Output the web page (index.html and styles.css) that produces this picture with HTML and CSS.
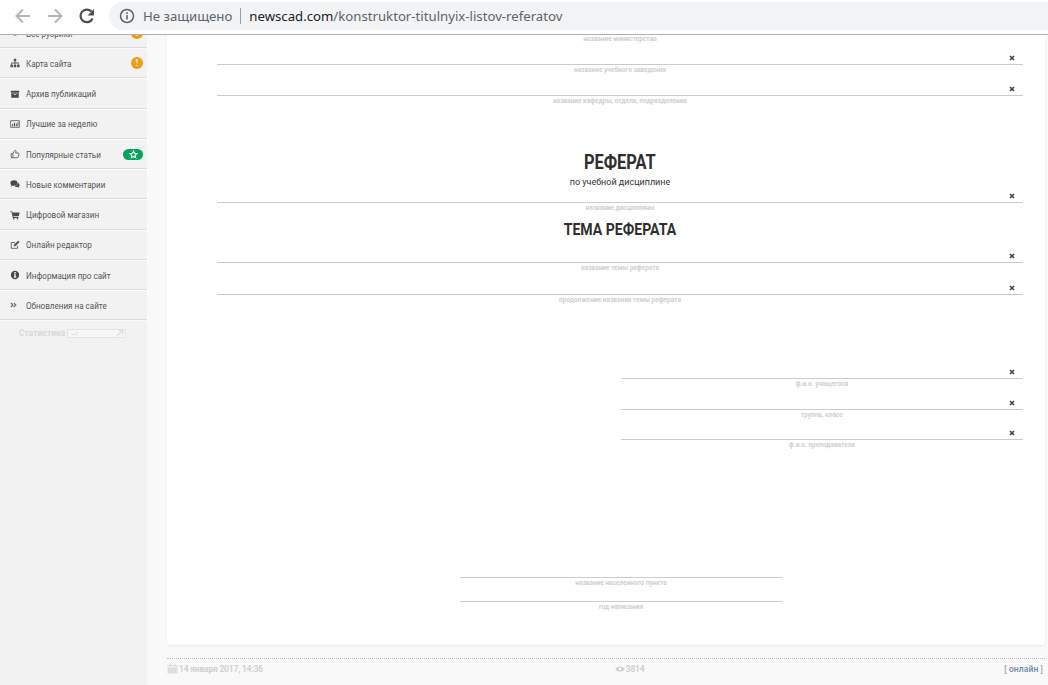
FILE: index.html
```html
<!DOCTYPE html>
<html lang="ru">
<head>
<meta charset="utf-8">
<title>Конструктор титульных листов рефератов</title>
<link rel="stylesheet" href="styles.css">
</head>
<body>
<header class="toolbar">
  <svg class="nav-icon" width="18" height="18" viewBox="0 0 18 18"><path d="M16 9H3M9 2.5 2.5 9 9 15.5" fill="none" stroke="#b4b4b4" stroke-width="2"/></svg>
  <svg class="nav-icon" width="18" height="18" viewBox="0 0 18 18"><path d="M2 9h13M9 2.500 15.500 9 9 15.500" fill="none" stroke="#b4b4b4" stroke-width="2"/></svg>
  <svg class="nav-icon" width="18" height="18" viewBox="0 0 18 18"><path d="M14.600 11.500A6.300 6.300 0 1 1 13.400 4.500" fill="none" stroke="#4f4f4f" stroke-width="2.200"/><path d="M16 2v6.500H9.500z" fill="#4f4f4f"/></svg>
  <div class="omnibox">
    <svg width="16" height="16" viewBox="0 0 16 16"><circle cx="8" cy="8" r="6.500" fill="none" stroke="#5f6368" stroke-width="1.500"/><path d="M7.200 7h1.600v4.500H7.200zM7.200 4.300h1.600v1.600H7.200z" fill="#5f6368"/></svg>
    <span class="insecure">Не защищено</span>
    <span class="divider"></span>
    <span class="url"><b>newscad.com</b>/konstruktor-titulnyix-listov-referatov</span>
  </div>
</header>

<div class="page">
  <nav class="sidebar">
    <ul class="menu">
      <li class="menu-item">
        <svg class="icon" viewBox="0 0 12 12"><circle cx="6" cy="6" r="3" fill="#555"/></svg>
        <span class="label">Все рубрики</span>
        <span class="badge-warn">!</span>
      </li>
      <li class="menu-item">
        <svg class="icon" viewBox="0 0 12 12"><path d="M4.500 1h3v3h-1v1.500h4V8h1v3h-3V8h1V6.500h-3V8h1v3h-3V8h1V6.500h-3V8h1v3h-3V8h1V5.500h4V4h-1z" fill="#555"/></svg>
        <span class="label">Карта сайта</span>
        <span class="badge-warn">!</span>
      </li>
      <li class="menu-item">
        <svg class="icon" viewBox="0 0 12 12"><path d="M1 2h10v2.500H1zM1.500 5H10.500v5.500h-9zM4.500 6.200v1h3v-1z" fill="#4a4a4a" fill-rule="evenodd"/></svg>
        <span class="label">Архив публикаций</span>
      </li>
      <li class="menu-item">
        <svg class="icon" viewBox="0 0 12 12"><path d="M.8 2h10.400v8H.8z" fill="none" stroke="#555"/><path d="M2.500 6h1.300v2.800H2.500zM4.700 4.500H6v4.300H4.700zM6.900 5.500h1.300v3.300H6.900zM9 3.500h1v5.300H9z" fill="#555"/></svg>
        <span class="label">Лучшие за неделю</span>
      </li>
      <li class="menu-item">
        <svg class="icon" viewBox="0 0 12 12"><path d="M1.500 5.500h2v5h-2zM3.500 5.500 6 1.500c1 0 1.500.8 1.200 1.800L6.800 4.800h3c.9 0 1.200.8 1 1.500l-.9 3.300c-.2.600-.6.900-1.200.900H3.500" fill="none" stroke="#555"/></svg>
        <span class="label">Популярные статьи</span>
        <span class="badge-star"><svg width="9" height="9" viewBox="0 0 12 12"><path d="m6 1.300 1.400 3 3.300.4-2.400 2.200.6 3.300L6 8.600l-2.900 1.600.6-3.300L1.300 4.700l3.300-.4z" fill="none" stroke="#fff" stroke-width="1.500"/></svg></span>
      </li>
      <li class="menu-item">
        <svg class="icon" viewBox="0 0 12 12"><ellipse cx="4.800" cy="4.800" rx="4.300" ry="3.200" fill="#4a4a4a"/><path d="M2 7l-1 2 3-1z" fill="#4a4a4a"/><path d="M9.500 4.500c1.200.6 2 1.400 2 2.600 0 .9-.5 1.600-1.200 2l.7 1.400-2.300-1c-1.300.2-2.700-.2-3.500-1 2.500 0 4.500-1.800 4.300-4z" fill="#4a4a4a"/></svg>
        <span class="label">Новые комментарии</span>
      </li>
      <li class="menu-item">
        <svg class="icon" viewBox="0 0 12 12"><path d="M.5 1.500h2l.5 1.500h8.500l-1 4.500H4l.3 1H10v1H3.400L1.800 2.500H.5z" fill="#4a4a4a"/><circle cx="4.500" cy="10.500" r="1" fill="#4a4a4a"/><circle cx="9" cy="10.500" r="1" fill="#4a4a4a"/></svg>
        <span class="label">Цифровой магазин</span>
      </li>
      <li class="menu-item">
        <svg class="icon" viewBox="0 0 12 12"><path d="M9 7v3H1.500V3H6" fill="none" stroke="#555"/><path d="M4.500 7.800 5 5.500 9.800 1l1.700 1.500L6.800 7.300z" fill="#555"/></svg>
        <span class="label">Онлайн редактор</span>
      </li>
      <li class="menu-item">
        <svg class="icon" viewBox="0 0 12 12"><circle cx="6" cy="6" r="5" fill="#4a4a4a"/><path d="M5 2.500h2v1.600H5zM4.800 5h2.200v3.200h.6v1.200H4.600V8.200h.6V6.200h-.4z" fill="#f2f2f2"/></svg>
        <span class="label">Информация про сайт</span>
      </li>
      <li class="menu-item">
        <svg class="icon" viewBox="0 0 12 12"><path d="M1 3.500 3.500 6 1 8.500M4.500 3.500 7 6 4.500 8.500" fill="none" stroke="#666" stroke-width="1.400"/></svg>
        <span class="label">Обновления на сайте</span>
      </li>
    </ul>
    <div class="stats">
      <span>Статистика</span>
      <span class="stats-box"><i>¬1</i><svg width="8" height="8" viewBox="0 0 8 8"><path d="M1 7 7 1M2.500 1H7v4.500" fill="none" stroke="#ddd" stroke-width="1.300"/></svg></span>
    </div>
  </nav>

  <main class="content">
    <article class="card">
      <p class="caption first">название министерства</p>
      <div class="line h21"><svg class="clear" viewBox="0 0 6 6"><path d="M1 1l4 4M5 1 1 5"/></svg></div>
      <p class="caption">название учебного заведения</p>
      <div class="line h21"><svg class="clear" viewBox="0 0 6 6"><path d="M1 1l4 4M5 1 1 5"/></svg></div>
      <p class="caption">название кафедры, отдела, подразделения</p>

      <h1 class="title"><span>РЕФЕРАТ</span></h1>
      <p class="subtitle">по учебной дисциплине</p>
      <div class="line h14"><svg class="clear" viewBox="0 0 6 6"><path d="M1 1l4 4M5 1 1 5"/></svg></div>
      <p class="caption">название дисциплины</p>
      <h2 class="topic"><span>ТЕМА РЕФЕРАТА</span></h2>
      <div class="line h23"><svg class="clear" viewBox="0 0 6 6"><path d="M1 1l4 4M5 1 1 5"/></svg></div>
      <p class="caption">название темы реферата</p>
      <div class="line h22"><svg class="clear" viewBox="0 0 6 6"><path d="M1 1l4 4M5 1 1 5"/></svg></div>
      <p class="caption">продолжение названия темы реферата</p>

      <div class="signers">
        <div class="line h74"><svg class="clear" viewBox="0 0 6 6"><path d="M1 1l4 4M5 1 1 5"/></svg></div>
        <p class="caption">ф.и.о. учащегося</p>
        <div class="line h21"><svg class="clear" viewBox="0 0 6 6"><path d="M1 1l4 4M5 1 1 5"/></svg></div>
        <p class="caption">группа, класс</p>
        <div class="line h20"><svg class="clear" viewBox="0 0 6 6"><path d="M1 1l4 4M5 1 1 5"/></svg></div>
        <p class="caption">ф.и.о. преподавателя</p>
      </div>

      <div class="place">
        <div class="line h128"></div>
        <p class="caption">название населенного пункта</p>
        <div class="line h14"></div>
        <p class="caption">год написания</p>
      </div>
    </article>

    <footer class="meta">
      <span class="meta-item"><svg class="cal" width="11" height="11" viewBox="0 0 11 11"><path d="M.5 2h10v8.500H.5z" fill="#ddd"/><path d="M2.500.5h1.500V3H2.500zM7 .5h1.500V3H7z" fill="#ddd"/><path d="M1.200 4h8.600" stroke="#f9f9f9"/></svg>14 января 2017, 14:36</span>
      <span class="meta-item views"><svg width="10" height="8" viewBox="0 0 10 8"><path d="M.3 4C2.500.5 7.500.5 9.700 4 7.500 7.500 2.500 7.500.3 4z" fill="#ccc"/><circle cx="5" cy="4" r="1.500" fill="#f9f9f9"/></svg>3814</span>
      <span class="online"><i>[</i> онлайн <i>]</i></span>
    </footer>
  </main>
</div>
</body>
</html>
```

FILE: styles.css
```css
* { box-sizing: border-box; }
html, body { height: 100%; margin: 0; }
body {
  display: flex;
  flex-direction: column;
  overflow: hidden;
  background: #f9f9f9;
  font-family: Roboto, "Liberation Sans", sans-serif;
}

/* browser chrome */
.toolbar {
  flex: none;
  height: 35px;
  display: flex;
  align-items: center;
  padding: 0 0 3px 14px;
  gap: 14px;
  background: #fff;
  border-bottom: 1px solid #b0b0b0;
}
.nav-icon { flex: none; }
.omnibox {
  flex: 1;
  height: 28px;
  margin-left: -1px;
  padding-left: 10px;
  display: flex;
  align-items: center;
  background: #f1f3f4;
  border-radius: 14px 0 0 14px;
  font-family: "Noto Sans", sans-serif;
  font-size: 13.200px;
  color: #5f6368;
  white-space: nowrap;
}
.insecure { margin-left: 8px; }
.divider { width: 1px; height: 16px; margin: 0 8px; background: #9aa0a6; }
.url b { font-weight: 400; color: #202124; }

/* page */
.page { flex: 1; min-height: 0; display: flex; overflow: hidden; }

/* sidebar */
.sidebar { flex: none; width: 147px; background: #f2f2f2; overflow: hidden; }
.menu { list-style: none; margin: -17.100px 0 0; padding: 0; }
.menu-item {
  height: 30.250px;
  padding: 1px 4px 0 10px;
  display: flex;
  align-items: center;
  border-bottom: 1px solid #dcdcdc;
  box-shadow: 0 1px 0 #fafafa;
  color: #555;
  white-space: nowrap;
}
.label {
  display: inline-block;
  font-size: 9.500px;
  transform: scaleX(.85);
  transform-origin: left center;
}
.icon { flex: none; width: 10px; height: 10px; margin-right: 6px; }
.badge-warn {
  margin-left: auto;
  width: 12px;
  height: 12px;
  border-radius: 50%;
  background: #f39c12;
  color: #fff;
  font-size: 9px;
  font-weight: 700;
  line-height: 12px;
  text-align: center;
}
.badge-star {
  margin-left: auto;
  width: 20px;
  height: 11px;
  border-radius: 6px;
  background: #00a65a;
  display: flex;
  align-items: center;
  justify-content: center;
}
.stats {
  display: flex;
  align-items: center;
  gap: 2px;
  padding: 8px 0 0 19px;
  font-size: 8.500px;
  font-weight: 700;
  color: #d8d8d8;
}
.stats-box {
  width: 59px;
  height: 9px;
  padding: 0 1px 0 3px;
  display: flex;
  align-items: center;
  justify-content: space-between;
  border: 1px solid #e4e4e4;
  background: #f6f6f6;
  font-size: 6px;
  font-weight: 400;
}
.stats-box i { font-style: normal; }

/* main column */
.content { flex: 1; min-width: 0; padding: 0 3px 0 20px; }
.card {
  padding: 0 22px 33px 50px;
  background: #fff;
  border-radius: 0 0 3px 3px;
  box-shadow: 0 1px 2px rgba(0, 0, 0, .08);
}
.caption {
  height: 10px;
  margin: 0;
  padding-top: 1px;
  font-size: 6.500px;
  font-weight: 700;
  line-height: 9px;
  text-align: center;
  color: #d0d0d0;
  white-space: nowrap;
}
.caption.first { height: 9px; padding-top: 0; }
.line {
  display: flex;
  justify-content: flex-end;
  align-items: flex-end;
  padding: 0 8px 3px 0;
  border-bottom: 1px solid #ccc;
}
.h14 { height: 14px; }
.h20 { height: 20px; }
.h21 { height: 21px; }
.h22 { height: 22px; }
.h23 { height: 23px; }
.h74 { height: 74px; }
.h128 { height: 128px; }
.clear { width: 6px; height: 6px; fill: none; stroke: #444; stroke-width: 1.600; }
.title, .topic { margin: 0; text-align: center; font-weight: 700; color: #2f2f2f; }
.title span, .topic span { display: inline-block; }
.title { margin-top: 44px; font-size: 20px; line-height: 24px; }
.title span { transform: scaleX(.82); }
.subtitle { margin: 1px 0 0; font-size: 9px; line-height: 14px; text-align: center; color: #333; }
.topic { margin-top: 7px; font-size: 16px; line-height: 20px; }
.topic span { transform: scaleX(.88); }
.signers { margin-left: 404px; }
.place { width: 322px; margin-left: 243px; }

/* footer */
.meta {
  height: 21px;
  margin-top: 13px;
  display: flex;
  align-items: center;
  justify-content: space-between;
  padding-right: 2px;
  border-top: 1px dotted #bbb;
  font-size: 8.500px;
  letter-spacing: -.2px;
  font-weight: 700;
  color: #d0d0d0;
}
.meta-item { display: flex; align-items: center; gap: 1px; }
.cal { margin-top: -1px; }
.views { margin-right: 8px; }
.online { color: #7088a8; font-weight: 500; letter-spacing: .1px; }
.online i { font-style: normal; color: #aaa; }
```
